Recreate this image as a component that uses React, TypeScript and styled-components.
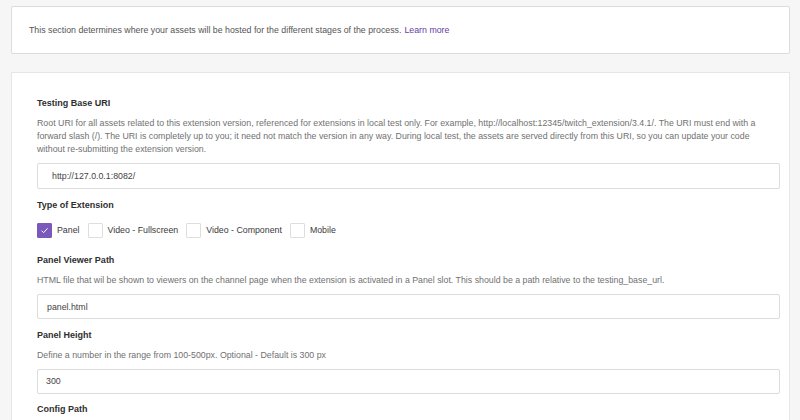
import React from "react";
import styled, { createGlobalStyle } from "styled-components";

const GlobalStyle = createGlobalStyle`
  html, body {
    margin: 0;
    padding: 0;
    background: #f6f6f6;
    font-family: "Liberation Sans", Arial, sans-serif;
  }
`;

const Page = styled.div`
  padding: 6px 10px 0 11px;
  width: 800px;
  height: 420px;
  box-sizing: border-box;
  overflow: hidden;
`;

const InfoCard = styled.div`
  height: 48px;
  box-sizing: border-box;
  background: #ffffff;
  border: 1px solid #dcdcdc;
  border-radius: 2px;
  display: flex;
  align-items: center;
  padding-left: 17px;
  font-size: 8.8px;
  color: #555555;
  margin-bottom: 18px;
`;

const LearnMore = styled.a`
  color: #6441a4;
  text-decoration: none;
  margin-left: 3px;
`;

const FormCard = styled.div`
  background: #ffffff;
  border: 1px solid #e6e6e6;
  border-bottom: none;
  padding: 24px 9px 0 25px;
  min-height: 400px;
`;

const Label = styled.div`
  font-size: 9px;
  font-weight: 700;
  line-height: 13px;
  color: #2f2f2f;
  margin-bottom: 7px;
`;

const Description = styled.p`
  margin: 0 0 7px;
  font-size: 8.8px;
  line-height: 13px;
  color: #717171;
`;

const Input = styled.div<{ $tall?: boolean; $indent?: number }>`
  height: ${(p) => (p.$tall ? 26 : 25)}px;
  box-sizing: border-box;
  border: 1px solid #dcdcdc;
  border-radius: 2px;
  display: flex;
  align-items: center;
  padding-left: ${(p) => p.$indent ?? 8}px;
  font-size: 8.8px;
  color: #444444;
  margin-bottom: 9.5px;
`;

const CheckRow = styled.div`
  display: flex;
  align-items: center;
  margin: 11px 0 16.5px;
  height: 15px;
`;

const CheckItem = styled.label`
  display: flex;
  align-items: center;
  gap: 5px;
  margin-right: 8px;
  font-size: 8.8px;
  color: #3a3a3a;
`;

const Box = styled.span<{ $checked?: boolean }>`
  width: 15px;
  height: 15px;
  box-sizing: border-box;
  border-radius: 1px;
  border: 1px solid ${(p) => (p.$checked ? "#7b59bb" : "#dedede")};
  background: ${(p) => (p.$checked ? "#7b59bb" : "#ffffff")};
  display: flex;
  align-items: center;
  justify-content: center;
`;

const Check = () => (
  <svg width="9" height="9" viewBox="0 0 10 10">
    <path d="M1.8 5.2 L4 7.4 L8.4 2.6" fill="none" stroke="#ffffff" strokeWidth="1.1" />
  </svg>
);

const types = [
  { name: "Panel", checked: true },
  { name: "Video - Fullscreen", checked: false },
  { name: "Video - Component", checked: false },
  { name: "Mobile", checked: false },
];

export default function App() {
  return (
    <Page>
      <GlobalStyle />
      <InfoCard>
        This section determines where your assets will be hosted for the different stages of the process.
        <LearnMore href="#">Learn more</LearnMore>
      </InfoCard>

      <FormCard>
        <Label>Testing Base URI</Label>
        <Description>
          Root URI for all assets related to this extension version, referenced for extensions in local test only. For
          example, http://localhost:12345/twitch_extension/3.4.1/. The URI must end with a
          <br />
          forward slash (/). The URI is completely up to you; it need not match the version in any way. During local
          test, the assets are served directly from this URI, so you can update your code
          <br />
          without re-submitting the extension version.
        </Description>
        <Input $tall $indent={14}>http://127.0.0.1:8082/</Input>

        <Label>Type of Extension</Label>
        <CheckRow>
          {types.map((t) => (
            <CheckItem key={t.name}>
              <Box $checked={t.checked}>{t.checked && <Check />}</Box>
              {t.name}
            </CheckItem>
          ))}
        </CheckRow>

        <Label>Panel Viewer Path</Label>
        <Description>
          HTML file that wil be shown to viewers on the channel page when the extension is activated in a Panel slot.
          This should be a path relative to the testing_base_url.
        </Description>
        <Input $indent={9}>panel.html</Input>

        <Label>Panel Height</Label>
        <Description>Define a number in the range from 100-500px. Optional - Default is 300 px</Description>
        <Input>300</Input>

        <Label>Config Path</Label>
      </FormCard>
    </Page>
  );
}
